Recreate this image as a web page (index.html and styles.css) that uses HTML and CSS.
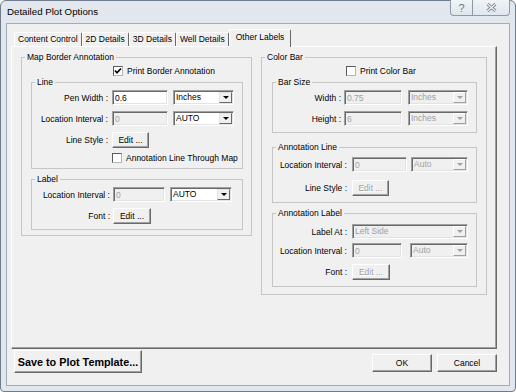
FILE: index.html
```html
<!DOCTYPE html>
<html lang="en">
<head>
    <meta charset="UTF-8">
    <meta name="viewport" content="width=device-width, initial-scale=1.0">
    <title>Detailed Plot Options</title>
    <link rel="stylesheet" href="styles.css">
</head>
<body>
<div class="window">
    <div class="titlebar">
        <span class="title">Detailed Plot Options</span>
        <div class="caption">
            <span class="cap-btn cap-help">?</span>
            <span class="cap-btn cap-close">
                <svg width="11" height="9" viewBox="0 0 11 9">
                    <path d="M1.5 1 L9.5 8 M9.5 1 L1.5 8" stroke="#7a8592" stroke-width="3" fill="none"/>
                    <path d="M1.5 1 L9.5 8 M9.5 1 L1.5 8" stroke="#f3f5f7" stroke-width="1.1" fill="none"/>
                </svg>
            </span>
        </div>
    </div>

    <div class="client">
        <div class="tabs">
            <span class="tab">Content Control</span>
            <span class="tab">2D Details</span>
            <span class="tab">3D Details</span>
            <span class="tab">Well Details</span>
            <span class="tab active">Other Labels</span>
        </div>

        <div class="panel">
            <div class="columns">

                <!-- left: map border annotation -->
                <fieldset class="group group-left">
                    <legend>Map Border Annotation</legend>
                    <div class="check-row">
                        <span class="check"><svg width="8" height="8" viewBox="0 0 8 8"><polyline points="1,3.5 3,5.8 7,1.5" stroke="#000" stroke-width="1.7" fill="none"/></svg></span>
                        <span class="check-text">Print Border Annotation</span>
                    </div>

                    <fieldset class="group sub line-set">
                        <legend>Line</legend>
                        <div class="row first">
                            <span class="lbl">Pen Width :</span>
                            <input class="txt field" type="text" value="0.6">
                            <div class="combo unit"><span class="combo-val">Inches</span><span class="combo-btn"></span></div>
                        </div>
                        <div class="row">
                            <span class="lbl">Location Interval :</span>
                            <input class="txt field" type="text" value="0" disabled>
                            <div class="combo unit"><span class="combo-val">AUTO</span><span class="combo-btn"></span></div>
                        </div>
                        <div class="row">
                            <span class="lbl">Line Style :</span>
                            <button class="btn edit">Edit ...</button>
                        </div>
                        <div class="check-row">
                            <span class="check"></span>
                            <span class="check-text">Annotation Line Through Map</span>
                        </div>
                    </fieldset>

                    <fieldset class="group sub label-set">
                        <legend>Label</legend>
                        <div class="row first">
                            <span class="lbl">Location Interval :</span>
                            <input class="txt field" type="text" value="0" disabled>
                            <div class="combo unit"><span class="combo-val">AUTO</span><span class="combo-btn"></span></div>
                        </div>
                        <div class="row">
                            <span class="lbl">Font :</span>
                            <button class="btn edit">Edit ...</button>
                        </div>
                    </fieldset>
                </fieldset>

                <!-- right: color bar -->
                <fieldset class="group group-right">
                    <legend>Color Bar</legend>
                    <div class="check-row">
                        <span class="check"></span>
                        <span class="check-text">Print Color Bar</span>
                    </div>

                    <fieldset class="group sub bar-set">
                        <legend>Bar Size</legend>
                        <div class="row first">
                            <span class="lbl">Width :</span>
                            <input class="txt field" type="text" value="0.75" disabled>
                            <div class="combo unit off"><span class="combo-val">Inches</span><span class="combo-btn"></span></div>
                        </div>
                        <div class="row">
                            <span class="lbl">Height :</span>
                            <input class="txt field" type="text" value="6" disabled>
                            <div class="combo unit off"><span class="combo-val">Inches</span><span class="combo-btn"></span></div>
                        </div>
                    </fieldset>

                    <fieldset class="group sub ann-line">
                        <legend>Annotation Line</legend>
                        <div class="row first">
                            <span class="lbl">Location Interval :</span>
                            <input class="txt field" type="text" value="0" disabled>
                            <div class="combo unit off"><span class="combo-val">Auto</span><span class="combo-btn"></span></div>
                        </div>
                        <div class="row loose">
                            <span class="lbl">Line Style :</span>
                            <button class="btn edit" disabled>Edit ...</button>
                        </div>
                    </fieldset>

                    <fieldset class="group sub ann-label">
                        <legend>Annotation Label</legend>
                        <div class="row first">
                            <span class="lbl">Label At :</span>
                            <div class="combo wide off"><span class="combo-val">Left Side</span><span class="combo-btn"></span></div>
                        </div>
                        <div class="row tight">
                            <span class="lbl">Location Interval :</span>
                            <input class="txt field" type="text" value="0" disabled>
                            <div class="combo unit off"><span class="combo-val">Auto</span><span class="combo-btn"></span></div>
                        </div>
                        <div class="row">
                            <span class="lbl">Font :</span>
                            <button class="btn edit" disabled>Edit ...</button>
                        </div>
                    </fieldset>
                </fieldset>

            </div>
        </div>

        <div class="footer">
            <button class="btn btn-save">Save to Plot Template...</button>
            <button class="btn btn-ok">OK</button>
            <button class="btn btn-cancel">Cancel</button>
        </div>
    </div>
</div>
</body>
</html>
```

FILE: styles.css
```css
* {
    box-sizing: border-box;
}
body {
    margin: 0;
    background: #fff;
    font-family: "Liberation Sans", Arial, sans-serif;
    font-size: 8.5px;
    color: #000;
}

/* window frame */
.window {
    width: 516px;
    height: 392px;
    border: 1px solid #6e7c8c;
    border-radius: 6px 6px 4px 4px;
    background: #e2e7ed;
    padding: 0 5px 5px;
}
.titlebar {
    height: 22px;
    display: flex;
    justify-content: space-between;
    align-items: flex-start;
}
.title {
    padding: 5px 0 0 1px;
    font-size: 9.7px;
    line-height: 12px;
}
.caption {
    display: flex;
    height: 16px;
    margin-top: -1px;
    border: 1px solid #8d99a7;
    border-top: 0;
    border-radius: 0 0 4px 4px;
    background: linear-gradient(#f1f4f7, #e0e6ed);
    overflow: hidden;
}
.cap-btn {
    display: flex;
    align-items: center;
    justify-content: center;
}
.cap-help {
    width: 22px;
    border-right: 1px solid #8d99a7;
    color: #6b7784;
    font-size: 11px;
}
.cap-close {
    width: 36px;
}

.client {
    height: 363px;
    border: 1px solid #a3adb8;
    background: #f0f0f0;
    padding: 5px 12px 0 4px;
}

/* tabs */
.tabs {
    display: flex;
    align-items: flex-end;
    height: 17px;
    padding-left: 3px;
}
.tab {
    height: 14px;
    padding: 0 3px;
    line-height: 12px;
    border: 1px solid #fff;
    border-right-color: #696969;
    border-bottom: 0;
    border-radius: 2px 2px 0 0;
    white-space: nowrap;
}
.tab.active {
    height: 18px;
    margin-bottom: -1px;
    padding: 1px 6px 0;
    position: relative;
    z-index: 1;
    background: #f0f0f0;
}
.panel {
    height: 303px;
    border: 1px solid;
    border-color: #fff #696969 #696969 #fff;
    box-shadow: inset -1px -1px 0 #a0a0a0;
    padding: 5px 9px 0;
}
.columns {
    display: grid;
    grid-template-columns: 231px 226px;
    column-gap: 9px;
    align-items: start;
}

/* group boxes */
.group {
    margin: 0;
    padding: 0 0 5px;
    min-width: 0;
    border: 1px solid #c6c6c6;
}
.group legend {
    margin-left: 3px;
    padding: 0 2px;
    line-height: 11px;
}
.group-right {
    padding-bottom: 7px;
}
.sub {
    margin-left: 9px;
    margin-right: 8px;
    padding-bottom: 6px;
}
.group-right .sub {
    margin-left: 10px;
    margin-right: 9px;
}
.sub + .sub {
    margin-top: 5px;
}
.line-set {
    padding-bottom: 4px;
}
.label-set {
    padding-bottom: 5px;
}
.group-right .ann-line {
    margin-top: 9px;
    padding-top: 2px;
}
.ann-label {
    padding-top: 3px;
}

/* rows */
.row {
    display: flex;
    align-items: center;
    margin-top: 6px;
}
.row.first {
    margin-top: 2px;
}
.row.tight {
    margin-top: 4px;
}
.row.loose {
    margin-top: 8px;
}
.lbl {
    flex: none;
    text-align: right;
    white-space: nowrap;
}
.line-set .lbl { width: 76px; margin-right: 4px; }
.line-set .field { width: 56px; }
.line-set .unit { width: 61px; margin-left: 5px; }
.line-set .edit { width: 37px; }

.label-set .lbl { width: 78px; margin-right: 3px; }
.label-set .field { width: 52px; }
.label-set .unit { width: 62px; margin-left: 5px; }
.label-set .edit { width: 38px; }

.bar-set .lbl { width: 68px; margin-right: 3px; }
.bar-set .field { width: 58px; }
.bar-set .unit { width: 60px; margin-left: 6px; }

.ann-line .lbl { width: 74px; margin-right: 5px; }
.ann-line .field { width: 55px; }
.ann-line .unit { width: 57px; margin-left: 4px; }
.ann-line .edit { width: 37px; }

.ann-label .lbl { width: 74px; margin-right: 5px; }
.ann-label .wide { width: 116px; }
.ann-label .field { width: 50px; }
.ann-label .unit { width: 58px; margin-left: 8px; }
.ann-label .edit { width: 38px; }

/* checkboxes */
.check-row {
    display: flex;
    align-items: center;
    height: 12px;
    margin-top: 2px;
}
.group-left > .check-row { padding-left: 91px; }
.group-right > .check-row { padding-left: 84px; }
.line-set .check-row {
    margin-top: 4px;
    padding-left: 80px;
}
.check {
    width: 10px;
    height: 10px;
    border: 1px solid;
    border-color: #5a5a5a #b5b5b5 #b5b5b5 #5a5a5a;
    background: #fff;
    display: flex;
    align-items: center;
    justify-content: center;
}
.check-text {
    margin-left: 4px;
}

/* text boxes and combos */
.txt {
    flex: none;
    height: 15px;
    margin: 0;
    padding: 0 2px;
    font: inherit;
    color: #000;
    border: 1px solid;
    border-color: #a0a0a0 #fff #fff #a0a0a0;
    box-shadow: inset 1px 1px 0 #696969, inset -1px -1px 0 #e3e3e3;
    background: #fff;
    outline: none;
}
.txt:disabled {
    background: #f0f0f0;
    color: #a0a0a0;
}
.combo {
    flex: none;
    display: flex;
    height: 15px;
    padding: 1px;
    border: 1px solid;
    border-color: #a0a0a0 #fff #fff #a0a0a0;
    box-shadow: inset 1px 1px 0 #696969, inset -1px -1px 0 #e3e3e3;
    background: #fff;
}
.combo-val {
    flex: 1;
    padding-left: 1px;
    line-height: 11px;
}
.combo-btn {
    width: 13px;
    border: 1px solid;
    border-color: #e3e3e3 #696969 #696969 #e3e3e3;
    background: #f0f0f0;
    display: flex;
    align-items: center;
    justify-content: center;
}
.combo-btn::after {
    content: "";
    border-left: 3px solid transparent;
    border-right: 3px solid transparent;
    border-top: 3px solid #000;
}
.combo.off {
    background: #f0f0f0;
    color: #a0a0a0;
}
.combo.off .combo-btn {
    border-color: #fff #a0a0a0 #a0a0a0 #fff;
}
.combo.off .combo-btn::after {
    border-top-color: #a0a0a0;
}

/* push buttons */
.btn {
    flex: none;
    height: 16px;
    margin: 0;
    padding: 0;
    font: inherit;
    color: #000;
    border: 1px solid;
    border-color: #fff #696969 #696969 #fff;
    box-shadow: inset -1px -1px 0 #a0a0a0;
    background: #f0f0f0;
}
.btn:disabled {
    color: #a0a0a0;
    text-shadow: 1px 1px 0 #fff;
}

.footer {
    display: flex;
    align-items: flex-start;
}
.btn-save {
    width: 128px;
    height: 23px;
    margin: 1px 0 0 3px;
    font-weight: bold;
    font-size: 10.8px;
}
.btn-ok {
    width: 60px;
    height: 18px;
    margin: 5px 0 0 auto;
}
.btn-cancel {
    width: 60px;
    height: 18px;
    margin: 5px 0 0 5px;
}
```
